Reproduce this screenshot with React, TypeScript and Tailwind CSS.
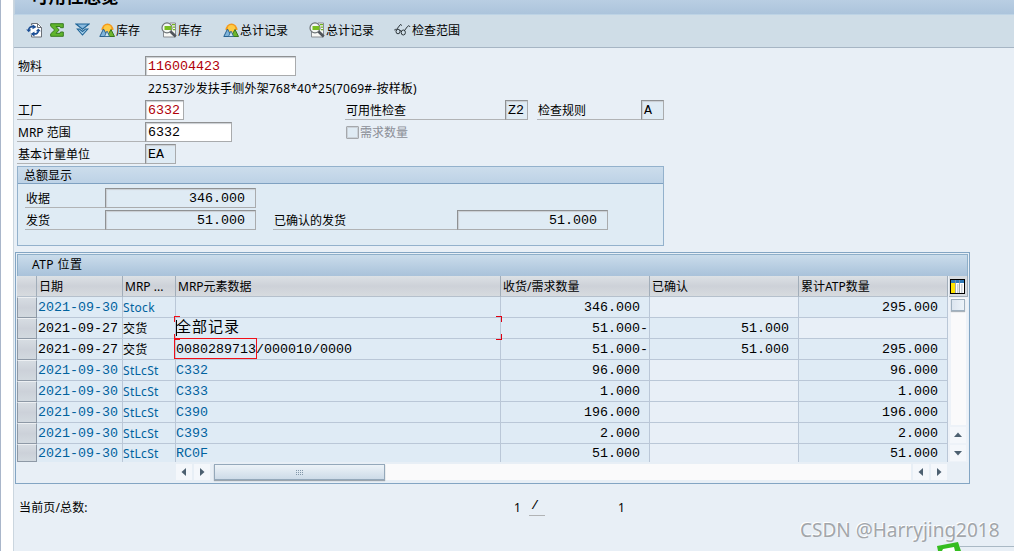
import type { ReactNode } from "react"
import clsx from "clsx"

type Row = {
  date: string
  type: string
  element: ReactNode
  qty: string
  confirmed?: string
  total?: string
  plain?: boolean
}

const rows: Row[] = [
  { date: "2021-09-30", type: "Stock", element: "", qty: "346.000 ", total: "295.000" },
  { date: "2021-09-27", type: "交货", element: <FocusedText />, qty: "51.000-", confirmed: "51.000", plain: true },
  { date: "2021-09-27", type: "交货", element: <DeliveryText />, qty: "51.000-", confirmed: "51.000", total: "295.000", plain: true },
  { date: "2021-09-30", type: "StLcSt", element: "C332", qty: "96.000 ", total: "96.000" },
  { date: "2021-09-30", type: "StLcSt", element: "C333", qty: "1.000 ", total: "1.000" },
  { date: "2021-09-30", type: "StLcSt", element: "C390", qty: "196.000 ", total: "196.000" },
  { date: "2021-09-30", type: "StLcSt", element: "C393", qty: "2.000 ", total: "2.000" },
  { date: "2021-09-30", type: "StLcSt", element: "RC0F", qty: "51.000 ", total: "51.000" },
]

const mono = "font-['Liberation_Mono','Noto_Sans_CJK_SC',monospace] text-[13.33px]"

function FocusedText() {
  return (
    <span className="relative block h-full w-full">
      <span className="block text-[15px] leading-[21px] tracking-[1px]">全部记录</span>
      <i className="absolute -left-[2px] -top-[2px] h-[6px] w-[6px] border-l border-t border-[#f01018]" />
      <i className="absolute -right-[2px] -top-[2px] h-[6px] w-[6px] border-r border-t border-[#e00010]" />
      <i className="absolute -left-[2px] -bottom-[2px] h-[6px] w-[6px] border-l border-b border-[#f01018]" />
      <i className="absolute -right-[2px] -bottom-[2px] h-[6px] w-[6px] border-r border-b border-[#e00010]" />
      <i className="absolute left-0 top-[2px] h-[16px] w-px bg-black" />
    </span>
  )
}

function DeliveryText() {
  return (
    <span className="relative block h-full">
      0080289713/000010/0000
      <i className="absolute -left-[2px] -top-px h-[21px] w-[83px] border border-[#f01018]" />
    </span>
  )
}

function RefreshIcon() {
  return (
    <svg width="16" height="16" viewBox="0 0 16 16" className="shrink-0">
      <path d="M5 1h7l3.500 3.500v10.500H5z" fill="#fff" />
      <path d="M5.500 3.500v-2h6l4 4v9.500h-10v-2M11.500 1.500v4h4" fill="none" stroke="#6b7178" />
      <path d="M2.700 8.200C2.700 5.500 4.500 4.500 7 4.700" fill="none" stroke="#1c4f95" strokeWidth="1.700" />
      <path d="M6.500 2.200l4 2.700-4 2.400z" fill="#1c4f95" />
      <path d="M.2 7.500h5L2.700 10.300z" fill="#1c4f95" />
      <path d="M12.300 8.500c0 2.500-1.800 3.600-4.300 3.400" fill="none" stroke="#1c4f95" strokeWidth="1.700" />
      <path d="M8.500 9.400v5l-4-2.500z" fill="#1c4f95" />
      <path d="M9.800 9.200L12.300 6.400l2.500 2.800z" fill="#1c4f95" />
    </svg>
  )
}

function SumIcon() {
  return (
    <svg width="14" height="14" viewBox="0 0 14 14" className="shrink-0">
      <path
        d="M.7.7h12.600v4H10.500L10 3.500H6l3.200 3.500L6 10.300h4l.5-1.300h2.800v4.300H.7v-2.500L4.700 7 .7 3.200z"
        fill="#5fb52c"
        stroke="#387a20"
      />
    </svg>
  )
}

function DoubleArrowIcon() {
  return (
    <svg width="15" height="14" viewBox="0 0 15 14" className="shrink-0">
      <path d="M1 1h13L7.500 6.300z" fill="#8abade" stroke="#1f6597" strokeWidth="1.100" />
      <path d="M2.300 6h2.200l3 2.500 3-2.500h2.300L7.500 12z" fill="#a9d0eb" stroke="#1f6597" strokeWidth="1.100" />
    </svg>
  )
}

function StockIcon() {
  return (
    <svg width="16" height="16" viewBox="0 0 16 16" className="shrink-0">
      <path d="M2.500 8a6 6.500 0 0 1 12 0z" fill="#f39a1d" />
      <circle cx="8.500" cy="6.800" r="3.800" fill="#fecb45" />
      <path d="M.8 14.500L4.500 7l4 7.500z" fill="#7fb4da" stroke="#28628f" />
      <path d="M8 14.500L12 7.500l3.500 7z" fill="#6eb52c" stroke="#38771d" />
      <path d="M5.500 14.500L8 9l2.500 5.500z" fill="#cce3f1" stroke="#28628f" strokeWidth=".8" />
    </svg>
  )
}

function SearchListIcon() {
  return (
    <svg width="16" height="16" viewBox="0 0 16 16" className="shrink-0">
      <path d="M2.500 8v7h12V1H9" fill="#f7f8f5" stroke="#888d91" />
      <path d="M11 2h3v1.300h-3zm1 2.500h2v1.300h-2zm0 2.500h2v1.300h-2z" fill="#70b51e" />
      <circle cx="6" cy="5.900" r="5" fill="#f4f7f4" stroke="#6d7377" strokeWidth="1.200" />
      <path d="M3.500 4h7v4h-7z" fill="#78bd20" />
      <path d="M9.500 9.500l5.200 5" stroke="#50565c" strokeWidth="2.800" />
    </svg>
  )
}

function GlassesIcon() {
  return (
    <svg width="17" height="14" viewBox="0 0 17 14" className="shrink-0" fill="none" stroke="#1b2227" strokeWidth=".9">
      <ellipse cx="4" cy="8.500" rx="2" ry="2.300" />
      <ellipse cx="9.300" cy="9.500" rx="2.100" ry="2.500" />
      <path d="M6 8c.5-.8 1-.5 1.300.7M2.200 7.500C1.500 5.500.5 6.500.5 7.200M2.500 6.500L6 2c.7-1 1.500-.5 1.500.7M10.500 7.500l3-4c1-1.300 2-.8 2.500.5" />
    </svg>
  )
}

function Field({
  value,
  className,
  editable,
  right,
}: {
  value: string
  className: string
  editable?: boolean
  right?: boolean
}) {
  return (
    <div
      className={clsx(
        "h-5 shrink-0 border border-[#a9abad] border-t-[#8f9193] border-l-[#8f9193] leading-[19px] shadow-[inset_1px_1px_1px_#c9ced2]",
        mono,
        editable ? "bg-white" : "bg-[#dfebf4]",
        right ? "pr-[10px] text-right" : "pl-[2px]",
        className,
      )}
    >
      {value}
    </div>
  )
}

function Label({ children, className }: { children: ReactNode; className: string }) {
  return (
    <div className={clsx("h-5 shrink-0 border-b border-[#b1b3b5] pl-px leading-[22px]", className)}>
      {children}
    </div>
  )
}

function Arrow({ d, className }: { d: string; className?: string }) {
  return (
    <div className={clsx("flex h-4 w-4 shrink-0 items-center justify-center bg-[#f4f7fb]", className)}>
      <svg width="10" height="10" viewBox="0 0 10 10">
        <path d={d} fill="#4d6070" />
      </svg>
    </div>
  )
}

const left = "M7 1v8L2.500 5z"
const right = "M3 1v8l4.500-4z"
const up = "M1 7h8L5 2.500z"
const down = "M1 3h8L5 7.500z"

function Toolbar() {
  return (
    <div className="flex h-[34px] items-center border-b border-t border-[#a6b5c4] border-t-[#bdd3e5] bg-[#cfdde7] pl-3 pb-[3px]">
      <RefreshIcon />
      <span className="w-[8px]" />
      <SumIcon />
      <span className="w-[11px]" />
      <DoubleArrowIcon />
      <span className="w-[9px]" />
      <ToolText icon={<StockIcon />} text="库存" className="w-[62px]" />
      <ToolText icon={<SearchListIcon />} text="库存" className="w-[62px]" />
      <ToolText icon={<StockIcon />} text="总计记录" className="w-[86px]" />
      <ToolText icon={<SearchListIcon />} text="总计记录" className="w-[85px]" />
      <ToolText icon={<GlassesIcon />} text="检查范围" className="w-[90px]" />
    </div>
  )
}

function ToolText({ icon, text, className }: { icon: ReactNode; text: string; className: string }) {
  return (
    <div className={clsx("flex shrink-0 items-center gap-px whitespace-nowrap", className)}>
      {icon}
      <span className="pt-[3px]">{text}</span>
    </div>
  )
}

function Form() {
  return (
    <div className="flex flex-col gap-[2px] pl-[3px] pt-2">
      <div className="flex">
        <Label className="w-32">物料</Label>
        <Field value="116004423" className="w-[151px] text-[#b00008]" editable />
      </div>
      <div className="h-5 pl-[131px] leading-[21px] tracking-[0.22px]">22537沙发扶手侧外架768*40*25(7069#-按样板)</div>
      <div className="flex">
        <Label className="w-32">工厂</Label>
        <Field value="6332" className="w-[39px] text-[#b00008]" editable />
        <Label className="ml-[161px] w-40">可用性检查</Label>
        <Field value="Z2" className="w-[23px]" />
        <Label className="ml-[9px] w-[104px]">检查规则</Label>
        <Field value="A" className="w-[23px]" />
      </div>
      <div className="flex h-5">
        <Label className="w-32">MRP 范围</Label>
        <Field value="6332" className="w-[87px]" editable />
        <div className="ml-[114px] mt-1 h-[13px] w-[13px] rounded-[1px] border border-[#a5a8ac] bg-[#dfebf4] shadow-[inset_0_0_0_1px_#cbd2d9]" />
        <span className="ml-px leading-[22px] text-[#8b8e97]">需求数量</span>
      </div>
      <div className="flex">
        <Label className="w-32">基本计量单位</Label>
        <Field value="EA" className="w-[31px]" />
      </div>
    </div>
  )
}

function Totals() {
  return (
    <div className="ml-[3px] mt-[2px] h-20 w-[647px] border border-[#93b1cc] bg-[#dfebf4]">
      <div className="h-[17px] border-b border-[#7fa1c1] bg-linear-to-b from-[#ccddec] to-[#bdd2e6] pl-[6px] leading-[18px]">
        总额显示
      </div>
      <div className="flex flex-col gap-[2px] pl-[7px] pt-1">
        <div className="flex">
          <Label className="w-20">收据</Label>
          <Field value="346.000" className="w-[151px]" right />
        </div>
        <div className="flex">
          <Label className="w-20">发货</Label>
          <Field value="51.000" className="w-[151px]" right />
          <Label className="ml-[17px] w-[184px] pl-[2px]">已确认的发货</Label>
          <Field value="51.000" className="w-[151px]" right />
        </div>
      </div>
    </div>
  )
}

const cols = "grid grid-rows-[100%] grid-cols-[20px_86px_53px_325px_149px_149px_149px]"

function TableRow({ row, last }: { row: Row; last: boolean }) {
  const cell = clsx(
    "border-r border-[#bac7d7] whitespace-pre",
    last ? "leading-[20px]" : "border-b leading-[22px]",
  )
  const num = clsx(cell, "text-right text-black", mono)
  const color = row.plain ? "text-black" : "text-[#00629e]"
  return (
    <div className={clsx(cols, last ? "h-[18px]" : "h-[21px]")}>
      <div className="border border-[#8e99a6] border-t-[#edf0f3] bg-linear-to-b from-[#d6dce2] via-[#ccd1d9] to-[#d2d9df]" />
      <div className={clsx(cell, mono, color, "bg-[#dfebf5] pl-px")}>{row.date}</div>
      <div className={clsx(cell, color, "bg-[#dfebf5] tracking-[0.3px]")}>{row.type}</div>
      <div className={clsx(cell, mono, color, "bg-[#dfebf5]")}>{row.element}</div>
      <div className={clsx(num, "bg-[#dfebf5] pr-px")}>{row.qty}</div>
      <div className={clsx(num, "pr-[9px]", row.confirmed ? "bg-[#dfebf5]" : "bg-[#e8eff7]")}>{row.confirmed}</div>
      <div className={clsx(num, "pr-[9px]", row.total ? "bg-[#dfebf5]" : "bg-[#e8eff7]")}>{row.total}</div>
    </div>
  )
}

function AtpTable() {
  const headers = ["", "日期", "MRP ...", "MRP元素数据", "收货/需求数量", "已确认", "累计ATP数量"]
  return (
    <div className="ml-px mt-[6px] h-[232px] w-[955px] border border-[#83a5c3] pl-px pt-px">
      <div className="h-[22px] w-[951px] border border-b-0 border-[#8eafc9] bg-linear-to-b from-[#cadceb] to-[#a9c2da] pl-[14px] leading-[19px] tracking-[0.4px]">
        ATP 位置
      </div>
      <div className="flex">
        <div className="h-[186px] w-[931px]">
          <div className={clsx(cols, "h-[21px]")}>
            {headers.map((h, i) => (
              <div
                key={i}
                className="border-b border-r border-b-[#b5c0cc] border-r-[#a1adb9] bg-linear-to-b from-[#dce1e5] via-[#cdd1d8] to-[#d7dbdf] pl-[2px] leading-[22px] whitespace-nowrap"
              >
                {h}
              </div>
            ))}
          </div>
          {rows.map((row, i) => (
            <TableRow key={i} row={row} last={i === rows.length - 1} />
          ))}
        </div>
        <div className="flex h-[186px] w-5 flex-col items-center bg-[#edf2f8]">
          <div className="flex h-[21px] w-[19px] items-center justify-center border-b border-r border-[#a1adb9] bg-[#d7dce1]">
            <svg width="15" height="15" viewBox="0 0 15 15">
              <rect x=".5" y=".5" width="14" height="14" fill="#fff" stroke="#000" />
              <path d="M1 1h13v3H1z" fill="#2e79b9" />
              <path d="M1 4h4v10H1z" fill="#ffe400" />
              <path d="M7 5h1.500v9H7zm4 0h1.500v9H11z" fill="#cdd3da" />
              <path d="M5.500 1v13m4-13v13" stroke="#8a949e" strokeWidth=".8" />
            </svg>
          </div>
          <div className="mt-px h-[127px] w-[15px] bg-[#fafafb]">
            <div className="mt-px h-3 w-[14px] border border-[#9fb0bf] bg-linear-to-r from-[#dce5ef] to-[#edf3f9] shadow-[0_1px_1px_#aab3bb]" />
          </div>
          <Arrow d={up} className="mt-[2px]" />
          <Arrow d={down} className="mt-[2px]" />
        </div>
      </div>
      <div className="mt-[2px] flex h-4 w-[930px] pl-[159px]">
        <Arrow d={left} />
        <Arrow d={right} className="ml-[2px]" />
        <div className="ml-1 flex grow bg-[#fafafb]">
          <div className="flex h-4 w-[171px] items-center justify-center border border-[#94a8ba] bg-linear-to-b from-[#edf3f8] to-[#cddbe8] shadow-[0_1px_1px_#9ba5ae]">
            <svg width="10" height="5" viewBox="0 0 10 5">
              <path d="M1 .5h8M1 2.500h8M1 4.500h8" stroke="#8297a9" strokeDasharray="1 1" />
            </svg>
          </div>
        </div>
        <Arrow d={left} className="ml-[2px]" />
        <Arrow d={right} className="ml-[2px]" />
      </div>
    </div>
  )
}

export default function App() {
  return (
    <div className="relative flex h-[551px] w-[1014px] overflow-hidden bg-[#e8eff6] font-['Noto_Sans','Noto_Sans_CJK_SC',sans-serif] text-[12px] leading-[20px] text-black">
      <div className="w-[14px] shrink-0 border-l border-r border-l-[#a9b6ca] border-r-[#cbd6df] bg-white" />
      <div className="w-[1000px] shrink-0">
        <div className="flex h-[14px] items-end overflow-hidden border-l border-[#c5d3df] bg-linear-to-b from-[#b9cee3] to-[#acc4dc] pl-4">
          <span className="mb-[8px] h-5 text-[17.5px] font-bold leading-[20px] whitespace-nowrap">可用性总览</span>
        </div>
        <Toolbar />
        <Form />
        <Totals />
        <AtpTable />
        <div className="flex pl-[5px] pt-3 leading-[23px]">
          <span className="w-[495px] tracking-[0.15px]">当前页/总数:</span>
          <span className="w-[15px]">1</span>
          <span className={clsx("h-5 w-4 border-b border-[#b1b3b5] pl-[2px] leading-[20px]", mono)}>/</span>
          <span className="ml-[73px]">1</span>
        </div>
      </div>
      <div className="absolute left-[800px] top-[517px] text-[19px] leading-[26px] whitespace-nowrap text-[#a2a6aa] [text-shadow:-1px_-1px_0_#fff]">
        CSDN @Harryjing2018
      </div>
      <svg width="78" height="9" viewBox="0 0 78 9" className="absolute bottom-0 right-0">
        <path d="M24 4.500h54" stroke="#aab9c5" />
        <path d="M1 4l21-4 3 9H2z" fill="#35bd20" />
        <path d="M6 9l1-2 11-2 1 4z" fill="#fff" />
      </svg>
    </div>
  )
}
